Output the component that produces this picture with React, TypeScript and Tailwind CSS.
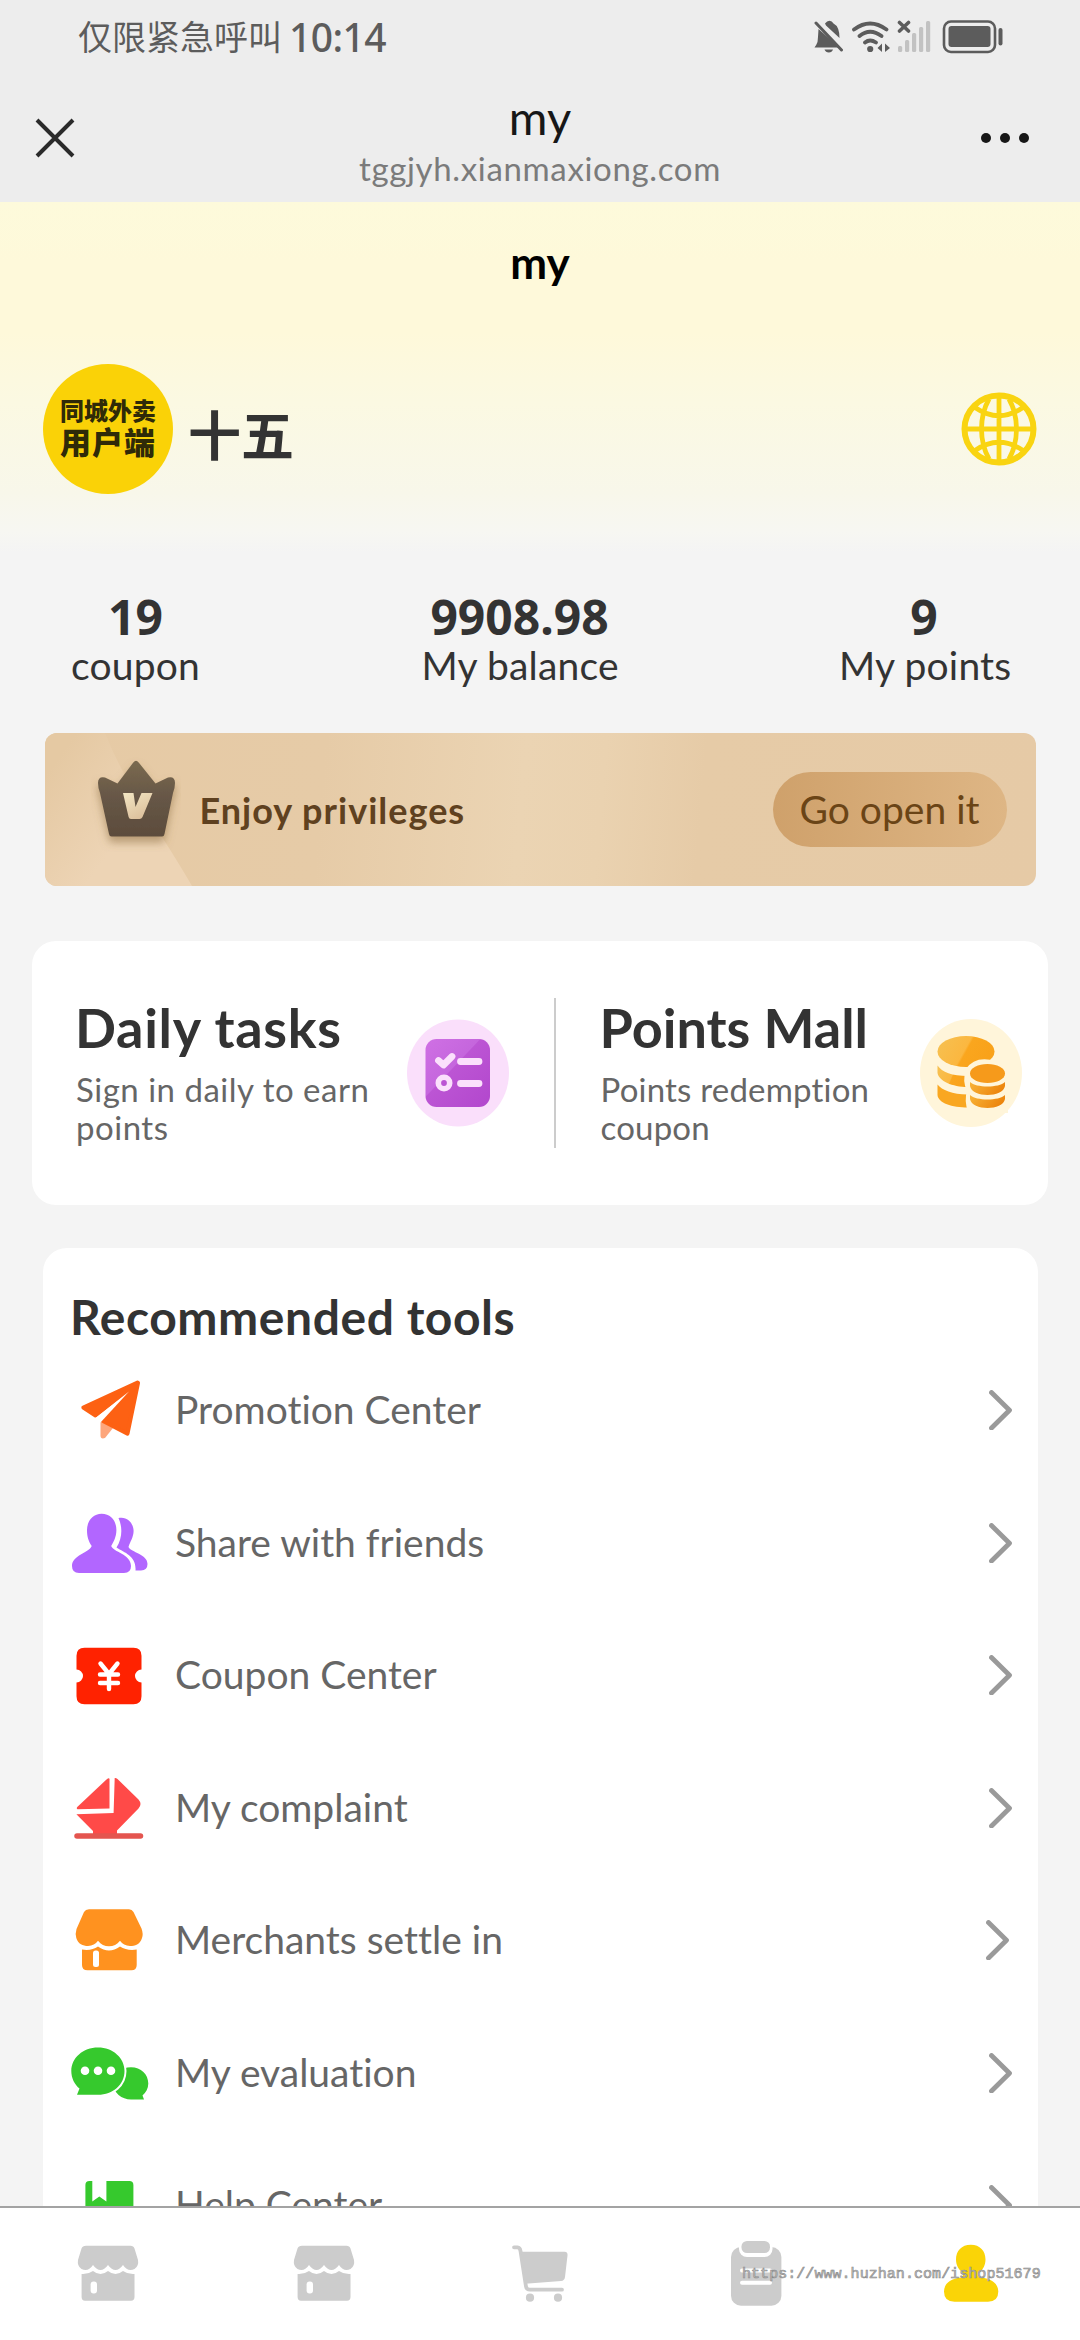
import type React from "react"

const PlaneIcon: React.FC = () => (
  <svg viewBox="0 0 78 78" className="size-[78px]">
    <path d="M29.500 50v14.500q0 4 4.500 2.500 L42 57z" fill="#fda67c" />
    <g fill="#fd6113" stroke="#fd6113" strokeWidth="4" strokeLinejoin="round">
      <path d="M66.500 11.500 12.300 36.500 24.500 44.500 60 17z" />
      <path d="M67 12 56.500 62.700 32 50 60 19z" />
    </g>
    <path d="M24.300 47.200 58 20.500 29.500 51.500z" fill="#fff" />
  </svg>
)

const FriendsIcon: React.FC = () => (
  <svg viewBox="0 0 78 78" className="size-[78px]" fill="#b266ff">
    <path d="M30.600 9.800C40 9.800 45.400 17 45.400 26C45.400 33 42.500 38 40.200 42C42 48 60 50 60 62Q60 69 53 69H8Q1 69 1 62C1 51 18 49 20.700 42C17.500 37 16 33 16 26C16 17 22 9.800 30.600 9.800Z" />
    <path d="M47.500 14C57 12 62.600 20 62.600 27C62.600 33 59 38 57.500 43C60 48.500 76.500 50 76.500 60Q76.500 66 70 66.500H64.500C65.500 52 54 49 45.500 43.500C51 35 52 24 47.500 14Z" />
  </svg>
)

const CouponIcon: React.FC = () => (
  <svg viewBox="0 0 78 78" className="size-[78px]">
    <path
      d="M13.500 11.700H62.500Q70.500 11.700 70.500 19.700V33.500A6.500 6.500 0 0 0 70.500 46.500V60.300Q70.500 68.300 62.500 68.300H13.500Q5.500 68.300 5.500 60.300V46.500A6.500 6.500 0 0 0 5.500 33.500V19.700Q5.500 11.700 13.500 11.700Z"
      fill="#ff2200"
    />
    <path
      d="M29.500 27.500 38 38 46.500 27.500M29 38.500H47M29 47H47M38 38V53"
      fill="none"
      stroke="#fff"
      strokeWidth="4.400"
      strokeLinecap="round"
      strokeLinejoin="round"
    />
  </svg>
)

const ComplaintIcon: React.FC = () => (
  <svg viewBox="0 0 78 78" className="size-[78px]" fill="#ff4a48">
    <path d="M35.500 10.500Q38.500 8 38.500 10.500V39.500L6.500 40.300Q5 39.500 6.500 37.800Z" />
    <path d="M43.700 9Q45 8.800 46.500 10L67.500 30.500Q71.500 35 67.500 39.500L46 61.500V65H22V62L5.400 45.200 42.600 44Z" />
    <path d="M6 67H69.500" stroke="#e4554f" strokeWidth="5.500" strokeLinecap="round" />
  </svg>
)

const MerchantIcon: React.FC = () => (
  <svg viewBox="0 0 78 78" className="size-[78px]" fill="#ff921f">
    <path d="M18 8.300H58Q61 8.300 62.500 11L70.500 27.500Q72.500 33 71 37C69 43.500 64 45 59 45C54.500 45 51.500 43 49 39.800C46 43.500 42.500 45.300 38 45.300C33.500 45.300 30 43.500 27 39.800C24.500 43 21.500 45 17 45C12 45 7 43 5.300 37Q4 33 5.500 28L13 11Q14.500 8.300 18 8.300Z" />
    <path d="M11 48.500Q20.500 50 27 45.500Q38 53.500 49 45.500Q56 50 65.700 48.500V64Q65.700 69.300 60.500 69.300H16.500Q11 69.300 11 64Z" />
    <rect x="22" y="49.500" width="6" height="16.500" rx="2.500" fill="#fff" />
  </svg>
)

const ChatIcon: React.FC = () => (
  <svg viewBox="0 0 78 78" className="size-[78px]" fill="#36c92d">
    <path d="M60 33.300C70 33.300 77.300 40.500 77.300 49.500C77.300 54.500 75 58.500 71.500 61.500L73 65.500H60C51 65.500 42 59 42 49C42 40 50 33.300 60 33.300Z" />
    <path
      d="M27 13.500C42 13.500 53.500 24 53.500 37C53.500 50.500 42 60.800 27 60.800H6L8.500 54.500C3.500 50.500.300 44 .300 37C.300 24 12 13.500 27 13.500Z"
      stroke="#fff"
      strokeWidth="4"
      paintOrder="stroke"
    />
    <g fill="#fff">
      <circle cx="14" cy="36.800" r="4.300" />
      <circle cx="27" cy="36.800" r="4.300" />
      <circle cx="40" cy="36.800" r="4.300" />
    </g>
  </svg>
)

const BookIcon: React.FC = () => (
  <svg viewBox="0 0 78 78" className="size-[78px]">
    <rect x="14.400" y="15" width="48" height="54" rx="4" fill="#36c92d" />
    <path d="M21.300 14H35.400V35.500L28.300 30.500 21.300 35.500Z" fill="#fff" />
  </svg>
)

const Chevron: React.FC = () => (
  <svg viewBox="0 0 24 40" className="h-10 w-6" fill="none" stroke="#9a9a9a" strokeWidth="4.800">
    <path d="M2.500 2.500 20.500 20.200 2.500 38" strokeLinecap="round" strokeLinejoin="round" />
  </svg>
)

const GlobeIcon: React.FC = () => (
  <svg viewBox="0 0 76 74" className="h-[74px] w-[76px]" fill="none" stroke="#f9d411">
    <ellipse cx="38" cy="37" rx="34.500" ry="33.500" strokeWidth="6" />
    <path
      d="M38 4V70M4 37H72M28 7C18 25 18 49 28 67M48 7C58 25 58 49 48 67M14 15.500Q38 32 62 15.500M14 58.500Q38 42 62 58.500"
      strokeWidth="4.800"
    />
  </svg>
)

const CrownIcon: React.FC = () => (
  <svg viewBox="0 0 90 100" className="h-[100px] w-[90px]">
    <defs>
      <linearGradient id="crown" x1="0" y1="0" x2="0" y2="1">
        <stop offset="0" stopColor="#7a6a50" />
        <stop offset="0.500" stopColor="#665646" />
        <stop offset="1" stopColor="#5c4c3c" />
      </linearGradient>
      <linearGradient id="crown-v" x1="0" y1="0" x2="0.600" y2="1">
        <stop offset="0" stopColor="#f3e6c4" />
        <stop offset="1" stopColor="#dcc09c" />
      </linearGradient>
      <filter id="crown-shadow" x="-30%" y="-30%" width="160%" height="160%">
        <feDropShadow dx="0" dy="6" stdDeviation="4.500" floodColor="#8a6c40" floodOpacity="0.550" />
      </filter>
    </defs>
    <path
      d="M41.500 11.500Q45 6 48.500 11.500L64.500 31.500 77 25.500Q84 24 84 31Q84 36 82 41L73.500 82Q73 84.500 71 84.500H20.500Q18.500 84.500 18 82L9 41Q7 36 7 31Q7 24 14 25.500L26.500 31.500Z"
      fill="url(#crown)"
      filter="url(#crown-shadow)"
    />
    <path d="M32 41H42.500L44.500 55 50.500 41H61.500L51.500 65Q50.500 67 48.500 67H40Q38 67 37.600 65Z" fill="url(#crown-v)" />
  </svg>
)

const TasksIcon: React.FC = () => (
  <svg viewBox="0 0 102 108" className="h-[108px] w-[102px]">
    <defs>
      <linearGradient id="tasks" x1="0" y1="0" x2="1" y2="1">
        <stop offset="0" stopColor="#cf70e4" />
        <stop offset="0.420" stopColor="#c566dd" />
        <stop offset="0.430" stopColor="#bc55d4" />
        <stop offset="1" stopColor="#b247cd" />
      </linearGradient>
    </defs>
    <ellipse cx="51" cy="54" rx="51" ry="53.500" fill="#fadffb" />
    <rect x="18.500" y="20" width="64.500" height="68" rx="11" fill="url(#tasks)" />
    <g fill="none" stroke="#fbe0fc" strokeWidth="6.800" strokeLinecap="round" strokeLinejoin="round">
      <path d="M31.500 41.500 36.500 46 45 37.500M53.500 42.500H72M53.500 64.500H72" />
      <circle cx="37" cy="64" r="5.700" strokeWidth="5.600" />
    </g>
  </svg>
)

const CoinsIcon: React.FC = () => (
  <svg viewBox="0 0 102 108" className="h-[108px] w-[102px]">
    <defs>
      <linearGradient id="coin" x1="0" y1="0" x2="1" y2="0.300">
        <stop offset="0" stopColor="#f6c152" />
        <stop offset="0.560" stopColor="#fbb740" />
        <stop offset="0.600" stopColor="#faa61e" />
        <stop offset="1" stopColor="#f9a21a" />
      </linearGradient>
      <linearGradient id="coin-low" x1="0" y1="0" x2="1" y2="0.300">
        <stop offset="0" stopColor="#f8b337" />
        <stop offset="1" stopColor="#ec850d" />
      </linearGradient>
    </defs>
    <ellipse cx="51" cy="54" rx="51" ry="54" fill="#fff5da" />
    <ellipse cx="46" cy="32.500" rx="28.500" ry="15.500" fill="url(#coin)" />
    <path d="M17.500 46.500C22 53 32 57 48 57V68C32 68 19 62 17.500 54Z" fill="url(#coin)" />
    <path d="M17.500 65.500C22 71 32 75.500 48 75.500V88.500C32 88.500 18 84 17.500 76Z" fill="#f9a721" />
    <path d="M46 50Q55 36 76 42L88 50V94H48Q44 80 47 72Q42 62 46 50Z" fill="#fff5da" />
    <ellipse cx="67.500" cy="54.500" rx="17.500" ry="9.500" fill="#f69a1b" />
    <path d="M50 63C56 69 79 69 85 63V67C83 79 52 79 50 67Z" fill="url(#coin-low)" />
    <path d="M50 76C56 82 79 82 85 76V80C83 92 52 92 50 80Z" fill="url(#coin-low)" />
  </svg>
)

const ShopTab: React.FC = () => (
  <svg viewBox="0 0 72 72" className="size-[72px]" fill="#cccccc">
    <path d="M14 7.700H58.500Q61.500 7.700 62.500 10.500L66 22Q67 28 62.500 31Q56 34.500 51 27Q43.500 37 36 27Q28.500 37 21 27Q16 34.500 9.500 31Q5 28 6 22L9.500 10.500Q10.500 7.700 14 7.700Z" />
    <path d="M9.600 36Q16 36.500 21 33Q28.500 39 36 33Q43.500 39 51 33Q56 36.500 62.500 36V59Q62.500 62.700 59 62.700H13Q9.600 62.700 9.600 59Z" />
    <rect x="18.600" y="43.500" width="6.400" height="12" rx="3" fill="#fff" />
  </svg>
)

const CartTab: React.FC = () => (
  <svg viewBox="0 0 72 72" className="size-[72px]" fill="#cccccc">
    <path
      d="M10 9.300H13.500Q16 9.500 16.500 13L22 48.500Q22.500 51.700 26 51.700H58"
      fill="none"
      stroke="#ccc"
      strokeWidth="3.800"
      strokeLinecap="round"
    />
    <path d="M17.500 13.700H60.500Q64 13.700 63.500 17.500L61 39Q60.500 42.700 57 43L24.500 45.500H21.500Z" />
    <circle cx="26" cy="59.700" r="4.100" />
    <circle cx="54" cy="59.700" r="4.100" />
  </svg>
)

const OrdersTab: React.FC = () => (
  <svg viewBox="0 0 72 72" className="size-[72px]" fill="#cccccc">
    <rect x="11" y="9" width="50.400" height="58.700" rx="10" />
    <rect x="19" y="0" width="33.500" height="19" rx="8" fill="#fff" />
    <rect x="21.500" y="3" width="28.500" height="12" rx="5.500" />
    <path d="M22 32.500H50M22 44.700H50" stroke="#fff" strokeWidth="4" strokeLinecap="round" />
  </svg>
)

const MineTab: React.FC = () => (
  <svg viewBox="0 0 72 72" className="size-[72px]" fill="#fad407">
    <path d="M34.800 6.800C44 6.800 49.500 13 49.500 21.500C49.500 27 47 31.500 43.500 34.500Q41 37.500 45 39.500C56 40.500 62.300 46 62.300 53.500Q62.300 63.700 52 63.700H18.500Q8 63.700 8 53.500C8 46 14 40.500 25 39.500Q28.500 37.500 26.500 34.500C22.500 31.500 20 27 20 21.500C20 13 25.500 6.800 34.800 6.800Z" />
  </svg>
)

const StatusIcons: React.FC = () => (
  <svg viewBox="0 0 190 34" className="h-[34px] w-[190px]" fill="#5c5c5c">
    {/* muted bell */}
    <path d="M11 3.500Q13 .8 15.500 .8T19.500 3.500Q25.500 6.500 25.500 18L12 5.500Z" />
    <path d="M4.500 9 25.500 27.500H.500Q2 26 3.500 22Q4 18 4.500 9Z" />
    <path d="M10.500 29.500H19Q18 32.500 14.800 32.500T10.500 29.500Z" />
    <path d="M2 3 27.500 30" stroke="#5c5c5c" strokeWidth="3" strokeLinecap="round" />
    {/* wifi */}
    <g fill="none" stroke="#5c5c5c" strokeWidth="3.800" strokeLinecap="round">
      <path d="M40 9.500Q56 -2.500 72.500 9.500M45.500 16Q56 7.500 67.500 16M51 22.500Q56 18.500 62 22.500" />
    </g>
    <circle cx="56.200" cy="29" r="3.100" />
    <path d="M68 23.500V32L63.500 28ZM71 23.500V32L76 28Z" />
    {/* no signal */}
    <path d="M85.500 2.500 94.500 11M94.500 2.500 85.500 11" stroke="#5c5c5c" strokeWidth="3.600" strokeLinecap="round" />
    <g fill="#c2c2c2">
      <rect x="84" y="26" width="4.200" height="6" rx="1.500" />
      <rect x="91" y="20" width="4.200" height="12" rx="1.500" />
      <rect x="98" y="13" width="4.200" height="19" rx="1.500" />
      <rect x="105" y="7" width="4.200" height="25" rx="1.500" />
      <rect x="112" y="1" width="4.200" height="31" rx="1.500" />
    </g>
    {/* battery */}
    <rect x="130" y="1.500" width="51" height="30.500" rx="7" fill="none" stroke="#5c5c5c" strokeWidth="2.600" />
    <rect x="134.500" y="6" width="42" height="21" rx="3" />
    <rect x="184.500" y="8" width="4" height="17.500" rx="2" />
  </svg>
)

const stats = [
  { value: "19", label: "coupon", width: "w-[129px]" },
  { value: "9908.98", label: "My balance", width: "w-[196px]" },
  { value: "9", label: "My points", width: "w-[170px]" },
]

const tools = [
  { name: "Promotion Center", Icon: PlaneIcon, arrow: "mr-0" },
  { name: "Share with friends", Icon: FriendsIcon, arrow: "mr-0" },
  { name: "Coupon Center", Icon: CouponIcon, arrow: "mr-0" },
  { name: "My complaint", Icon: ComplaintIcon, arrow: "mr-0" },
  { name: "Merchants settle in", Icon: MerchantIcon, arrow: "mr-[3px]" },
  { name: "My evaluation", Icon: ChatIcon, arrow: "mr-0" },
  { name: "Help Center", Icon: BookIcon, arrow: "mr-0" },
]

const tabs = [ShopTab, ShopTab, CartTab, OrdersTab, MineTab]

const App: React.FC = () => {
  return (
    <div className="relative flex h-[2340px] w-[1080px] flex-col overflow-hidden bg-[#f4f4f4] font-['Lato','Noto_Sans_CJK_SC',sans-serif] text-[#333] [font-variant-ligatures:none]">
      <header className="h-[202px] shrink-0 bg-[#ededed]">
        <div className="flex h-[74px] items-center justify-between pr-[76px] pl-[78px] text-[#5c5c5c]">
          <div className="flex items-center gap-[7px] whitespace-nowrap">
            <span className="text-[34px] leading-[40px]">仅限紧急呼叫</span>
            <span className="font-['Noto_Sans'] text-[39px] leading-[44px] font-medium tracking-[-0.6px]">10:14</span>
          </div>
          <StatusIcons />
        </div>
        <div className="flex h-32 items-center justify-between px-[35px]">
          <div className="w-20">
            <svg viewBox="0 0 40 40" className="size-10" stroke="#2a2a2a" strokeWidth="4">
              <path d="M2 2 38 38M38 2 2 38" />
            </svg>
          </div>
          <div className="flex flex-col items-center">
            <h1 className="text-[47px] leading-[60px] text-[#171717]">my</h1>
            <p className="text-[33px] leading-[42px] tracking-[0.650px] text-[#7b7b7b]">tggjyh.xianmaxiong.com</p>
          </div>
          <div className="flex w-20 gap-[9px] pl-[16px]">
            <i className="size-2.5 rounded-full bg-[#171717]" />
            <i className="size-2.5 rounded-full bg-[#171717]" />
            <i className="size-2.5 rounded-full bg-[#171717]" />
          </div>
        </div>
      </header>

      <main className="min-h-0 flex-1 overflow-hidden bg-[linear-gradient(180deg,#fdfadb_0px,#fef9da_60px,#fef9da_130px,#fbf9e2_200px,#f8f7ea_290px,#f7f7f2_330px,#f4f4f4_350px)]">
        <h2 className="pt-0.5 text-center text-[44px] leading-[116px] font-bold text-black">my</h2>

        <section className="mt-[44px] flex h-[130px] items-center pr-[43px] pl-[43px]">
          <div className="flex size-[130px] flex-col items-center rounded-full bg-[#fad207] pt-[32px] font-['Noto_Sans_CJK_SC'] font-black text-[#2f2a08]">
            <span className="text-[24px] leading-7">同城外卖</span>
            <span className="text-[31px] leading-[34px] tracking-[1px]">用户端</span>
          </div>
          <span className="mt-3 ml-[15px] flex-1 text-[53px] leading-none font-bold">十五</span>
          <GlobeIcon />
        </section>

        <section className="mt-[95px] flex justify-between px-[71px] text-center whitespace-nowrap">
          {stats.map((stat) => (
            <div key={stat.label} className={stat.width}>
              <div className="font-['Noto_Sans'] text-[48px] leading-[56px] font-bold">{stat.value}</div>
              <div className="text-[39px] leading-[40px] tracking-[0.200px]">{stat.label}</div>
            </div>
          ))}
        </section>

        <section className="relative mx-[44.500px] mt-12 flex h-[153px] items-center overflow-hidden rounded-[12px] bg-[linear-gradient(95deg,#e6caa5_0%,#e6cba7_28%,#ebd4b3_48%,#ead2b0_56%,#e6cba7_66%,#e6caa6_100%)] pr-[29px] pl-[46px]">
          <svg viewBox="0 0 150 153" className="absolute top-0 left-0 h-[153px] w-[150px]">
            <defs>
              <linearGradient id="sheen" x1="0" y1="0.200" x2="0.800" y2="0.800">
                <stop offset="0.050" stopColor="#e5c9a3" />
                <stop offset="0.700" stopColor="#edd4b5" />
              </linearGradient>
            </defs>
            <path d="M0 0H60Q75 38 105 85T147 153H0Z" fill="url(#sheen)" />
          </svg>
          <div className="relative mb-[15px]">
            <CrownIcon />
          </div>
          <span className="relative ml-[19px] flex-1 text-[36px] font-bold tracking-[1px] text-[#5f4120]">
            Enjoy privileges
          </span>
          <button className="h-[75px] w-[234px] rounded-full bg-linear-to-r from-[#cfa16b] to-[#deb685] text-[39px] leading-[73px] whitespace-nowrap text-[#6a4416]">
            Go open it
          </button>
        </section>

        <section className="mx-8 mt-[55px] flex h-[264px] items-center rounded-3xl bg-white">
          <div className="flex w-[522px] items-center pl-11">
            <div className="mb-1 w-[331px] whitespace-nowrap">
              <h3 className="-ml-px text-[54px] leading-[64px] font-bold tracking-[0.700px]">Daily tasks</h3>
              <p className="mt-2.5 text-[33px] leading-[38px] tracking-[0.500px] text-[#666]">
                Sign in daily to earn
                <br />
                points
              </p>
            </div>
            <TasksIcon />
          </div>
          <div className="h-[150px] w-[1.500px] bg-[#ccc]" />
          <div className="flex items-center pl-[45px]">
            <div className="mb-1 w-[319px] whitespace-nowrap">
              <h3 className="-ml-px text-[54px] leading-[64px] font-bold">Points Mall</h3>
              <p className="mt-2.5 text-[33px] leading-[38px] tracking-[0.200px] text-[#666]">
                Points redemption
                <br />
                coupon
              </p>
            </div>
            <CoinsIcon />
          </div>
        </section>

        <section className="mx-[42.500px] mt-[43px] rounded-t-3xl bg-white pt-[42px] pr-[25px] pl-[28.500px]">
          <h3 className="-ml-px text-[48px] leading-[54px] font-bold tracking-[0.550px]">Recommended tools</h3>
          <ul>
            {tools.map(({ name, Icon, arrow }) => (
              <li key={name} className="flex h-[132.500px] items-center">
                <Icon />
                <span className="ml-[26px] flex-1 pb-0.5 text-[39px] leading-[48px] text-[#666]">{name}</span>
                <div className={arrow}>
                  <Chevron />
                </div>
              </li>
            ))}
          </ul>
        </section>
      </main>

      <nav className="flex h-[134px] shrink-0 items-center border-t-2 border-[#a3a3a3] bg-white">
        {tabs.map((Tab, i) => (
          <div key={i} className="flex flex-1 justify-center">
            <Tab />
          </div>
        ))}
      </nav>

      <div className="absolute top-[2265px] left-[742px] font-['Liberation_Mono',monospace] text-[15px] leading-5 tracking-[0.050px] whitespace-nowrap text-[#c4c4c4] [-webkit-text-stroke:0.600px_#8a8a8a]">
        https://www.huzhan.com/ishop51679
      </div>
    </div>
  )
}

export default App
